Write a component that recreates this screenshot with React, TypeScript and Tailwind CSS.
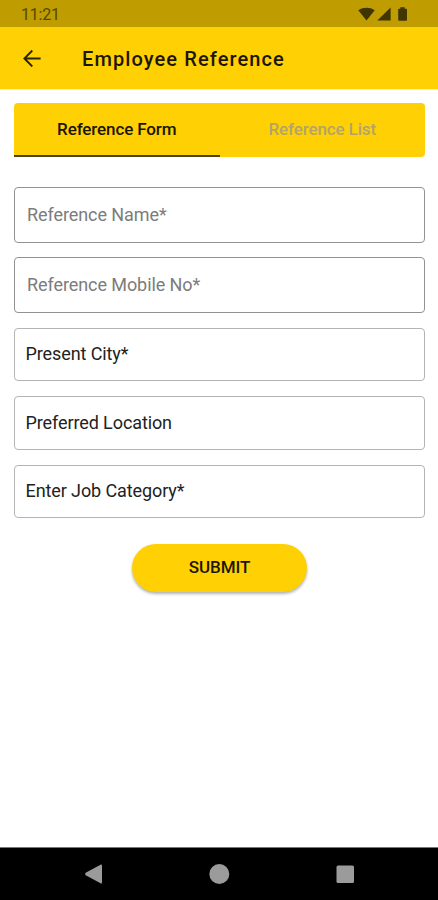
import { useState } from "react";

const tabs = ["Reference Form", "Reference List"];

const textFields = [
  { name: "referenceName", label: "Reference Name*", type: "text" },
  { name: "referenceMobile", label: "Reference Mobile No*", type: "tel" },
];

const pickers = ["Present City*", "Preferred Location", "Enter Job Category*"];

const StatusBar = () => (
  <div className="flex h-[27px] shrink-0 items-center justify-between bg-[#bf9c00] pl-[21px] pr-[30px] text-[#574700]">
    <span className="pt-[3px] text-[16px] leading-none tracking-[-0.2px]">
      11:21
    </span>
    <svg width="50" height="16" viewBox="0 0 50 16" fill="#403500">
      <path d="M0.3 4.2C4.7 0.9 12.3 0.9 16.7 4.2L8.5 14.6Z" />
      <path d="M19.3 14.6L32.6 1.4V14.6Z" />
      <path d="M42.3 1.2H46.7V2.8H48.2Q49 2.8 49 3.6V13.8Q49 14.8 48 14.8H41.2Q40.2 14.8 40.2 13.8V3.6Q40.2 2.8 41 2.8H42.3Z" />
    </svg>
  </div>
);

const Header = () => (
  <header className="flex h-[62px] shrink-0 items-center bg-[#ffd004] pl-[23px] shadow-[0_1px_1px_#fff0c0]">
    <button type="button" aria-label="Back">
      <svg
        width="18"
        height="18"
        viewBox="0 0 18 18"
        fill="none"
        stroke="#2b2400"
        strokeWidth="1.9"
      >
        <path d="M17.6 9.5H2M9.3 1.5L1.4 9.5L9.3 17.5" />
      </svg>
    </button>
    <h1 className="ml-[41px] pt-px text-[20px] font-medium tracking-[1.1px] text-[#1c1600]">
      Employee Reference
    </h1>
  </header>
);

const NavBar = () => (
  <nav className="flex h-[53px] shrink-0 items-center justify-center border-t border-[#777] bg-black">
    <svg width="272" height="22" viewBox="0 0 272 22" fill="#9b9b9b">
      <path d="M19 2.5V19.5Q19 21 17.5 20.3L2.7 12.2Q1.3 11 2.7 9.8L17.5 1.7Q19 1 19 2.5Z" />
      <circle cx="136.3" cy="11" r="10" />
      <rect x="253.5" y="2.5" width="17.5" height="17.5" rx="1.5" />
    </svg>
  </nav>
);

const App = () => {
  const [activeTab, setActiveTab] = useState(0);

  return (
    <div className="flex h-[900px] w-[438px] flex-col bg-white font-[Roboto,sans-serif]">
      <StatusBar />
      <Header />
      <main className="flex-1 pl-[14px] pr-[13px] pt-[14px]">
        <div className="flex h-[54px] overflow-hidden rounded-[4px] rounded-bl-none bg-[#ffd004]">
          {tabs.map((tab, index) => (
            <button
              key={tab}
              type="button"
              onClick={() => setActiveTab(index)}
              className={`flex-1 border-b-[2.5px] pt-px text-[17px] font-medium tracking-[-0.12px] ${
                index === activeTab
                  ? "border-[#4d4318] text-[#1c1600]"
                  : "border-transparent text-[#b3a468]"
              }`}
            >
              {tab}
            </button>
          ))}
        </div>

        <form
          className="mt-[30px] flex flex-col"
          onSubmit={(e) => e.preventDefault()}
        >
          <div className="flex flex-col gap-[14px]">
            {textFields.map((field) => (
              <input
                key={field.name}
                name={field.name}
                type={field.type}
                placeholder={field.label}
                className="h-[56px] w-full rounded-[4px] border border-[#929292] px-[12px] pb-[2px] text-[18px] tracking-[-0.08px] text-black placeholder:text-[#7c7c7c]"
              />
            ))}
          </div>
          <div className="mt-[14.5px] flex flex-col gap-[15px]">
            {pickers.map((label) => (
              <button
                key={label}
                type="button"
                className="h-[53.5px] w-full rounded-[4px] border border-[#b4b4b4] px-[10.5px] pb-px text-left text-[18px] tracking-[-0.1px] text-[#222]"
              >
                {label}
              </button>
            ))}
          </div>
          <button
            type="submit"
            className="mt-[25.5px] h-[48px] w-[175px] self-center rounded-full bg-[#ffd004] text-[17px] font-medium tracking-[-0.1px] text-[#1c1600] shadow-[0_2px_3px_rgba(0,0,0,0.3)]"
          >
            SUBMIT
          </button>
        </form>
      </main>
      <NavBar />
    </div>
  );
};

export default App;
